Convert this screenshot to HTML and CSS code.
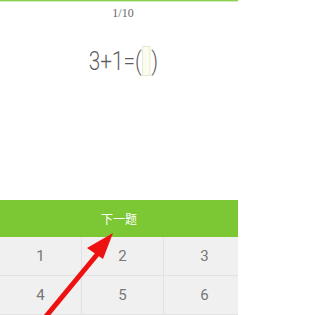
FILE: index.html
```html
<!DOCTYPE html>
<html lang="zh">
<head>
<meta charset="utf-8">
<link rel="stylesheet" href="styles.css">
</head>
<body>
<div class="screen">
  <div class="top-line"></div>
  <div class="head">
    <div class="counter">1/10</div>
    <div class="eq"><span>3+1=(</span><span class="blank"></span><span>)</span></div>
  </div>
  <button class="next">下一题</button>
  <div class="keypad">
    <div class="key">1</div>
    <div class="key">2</div>
    <div class="key">3</div>
    <div class="key">4</div>
    <div class="key">5</div>
    <div class="key">6</div>
  </div>
  <svg class="arrow" width="238" height="315" viewBox="0 0 238 315">
    <line x1="43" y1="320" x2="100" y2="251" stroke="#ee1111" stroke-width="5"/>
    <polygon points="113,233 87,248 103,259" fill="#ee1111"/>
  </svg>
</div>
</body>
</html>
```

FILE: styles.css
```css
html, body {
  margin: 0;
  padding: 0;
  background: #ffffff;
}
.screen {
  position: relative;
  width: 238px;
  height: 315px;
  overflow: hidden;
  display: flex;
  flex-direction: column;
}
.top-line {
  height: 1px;
  background: #8dd04c;
  border-bottom: 1px solid #d4edbd;
}
.head {
  height: 198px;
  display: flex;
  flex-direction: column;
  align-items: center;
}
.counter {
  margin-top: 5px;
  margin-left: 8px;
  font-family: "Liberation Serif", serif;
  font-size: 12px;
  line-height: 12px;
  color: #666666;
}
.eq {
  margin-top: 27px;
  margin-left: 8px;
  display: flex;
  align-items: center;
  font-family: Roboto, sans-serif;
  font-weight: 300;
  font-size: 26px;
  line-height: 30px;
  color: #5f5f5f;
  transform: scaleX(0.8);
}
.blank {
  width: 8px;
  height: 28px;
  background: #fbfbee;
  border: 1px solid #dfead0;
  margin: 0 1px;
}
.next {
  flex: none;
  height: 37px;
  margin: 0;
  padding: 0;
  border: none;
  width: 238px;
  background: #7cc734;
  color: #ffffff;
  font-family: "Noto Sans CJK SC", sans-serif;
  font-size: 12px;
}
.keypad {
  display: grid;
  grid-template-columns: 82px 82px 82px;
  grid-auto-rows: 39px;
  width: 246px;
  background: #f0f0f0;
}
.key {
  display: flex;
  align-items: center;
  justify-content: center;
  border-right: 1px solid #e2e2e2;
  border-bottom: 1px solid #e2e2e2;
  font-family: Roboto, sans-serif;
  font-size: 15px;
  color: #777777;
}
.arrow {
  position: absolute;
  left: 0;
  top: 0;
  pointer-events: none;
}
```
